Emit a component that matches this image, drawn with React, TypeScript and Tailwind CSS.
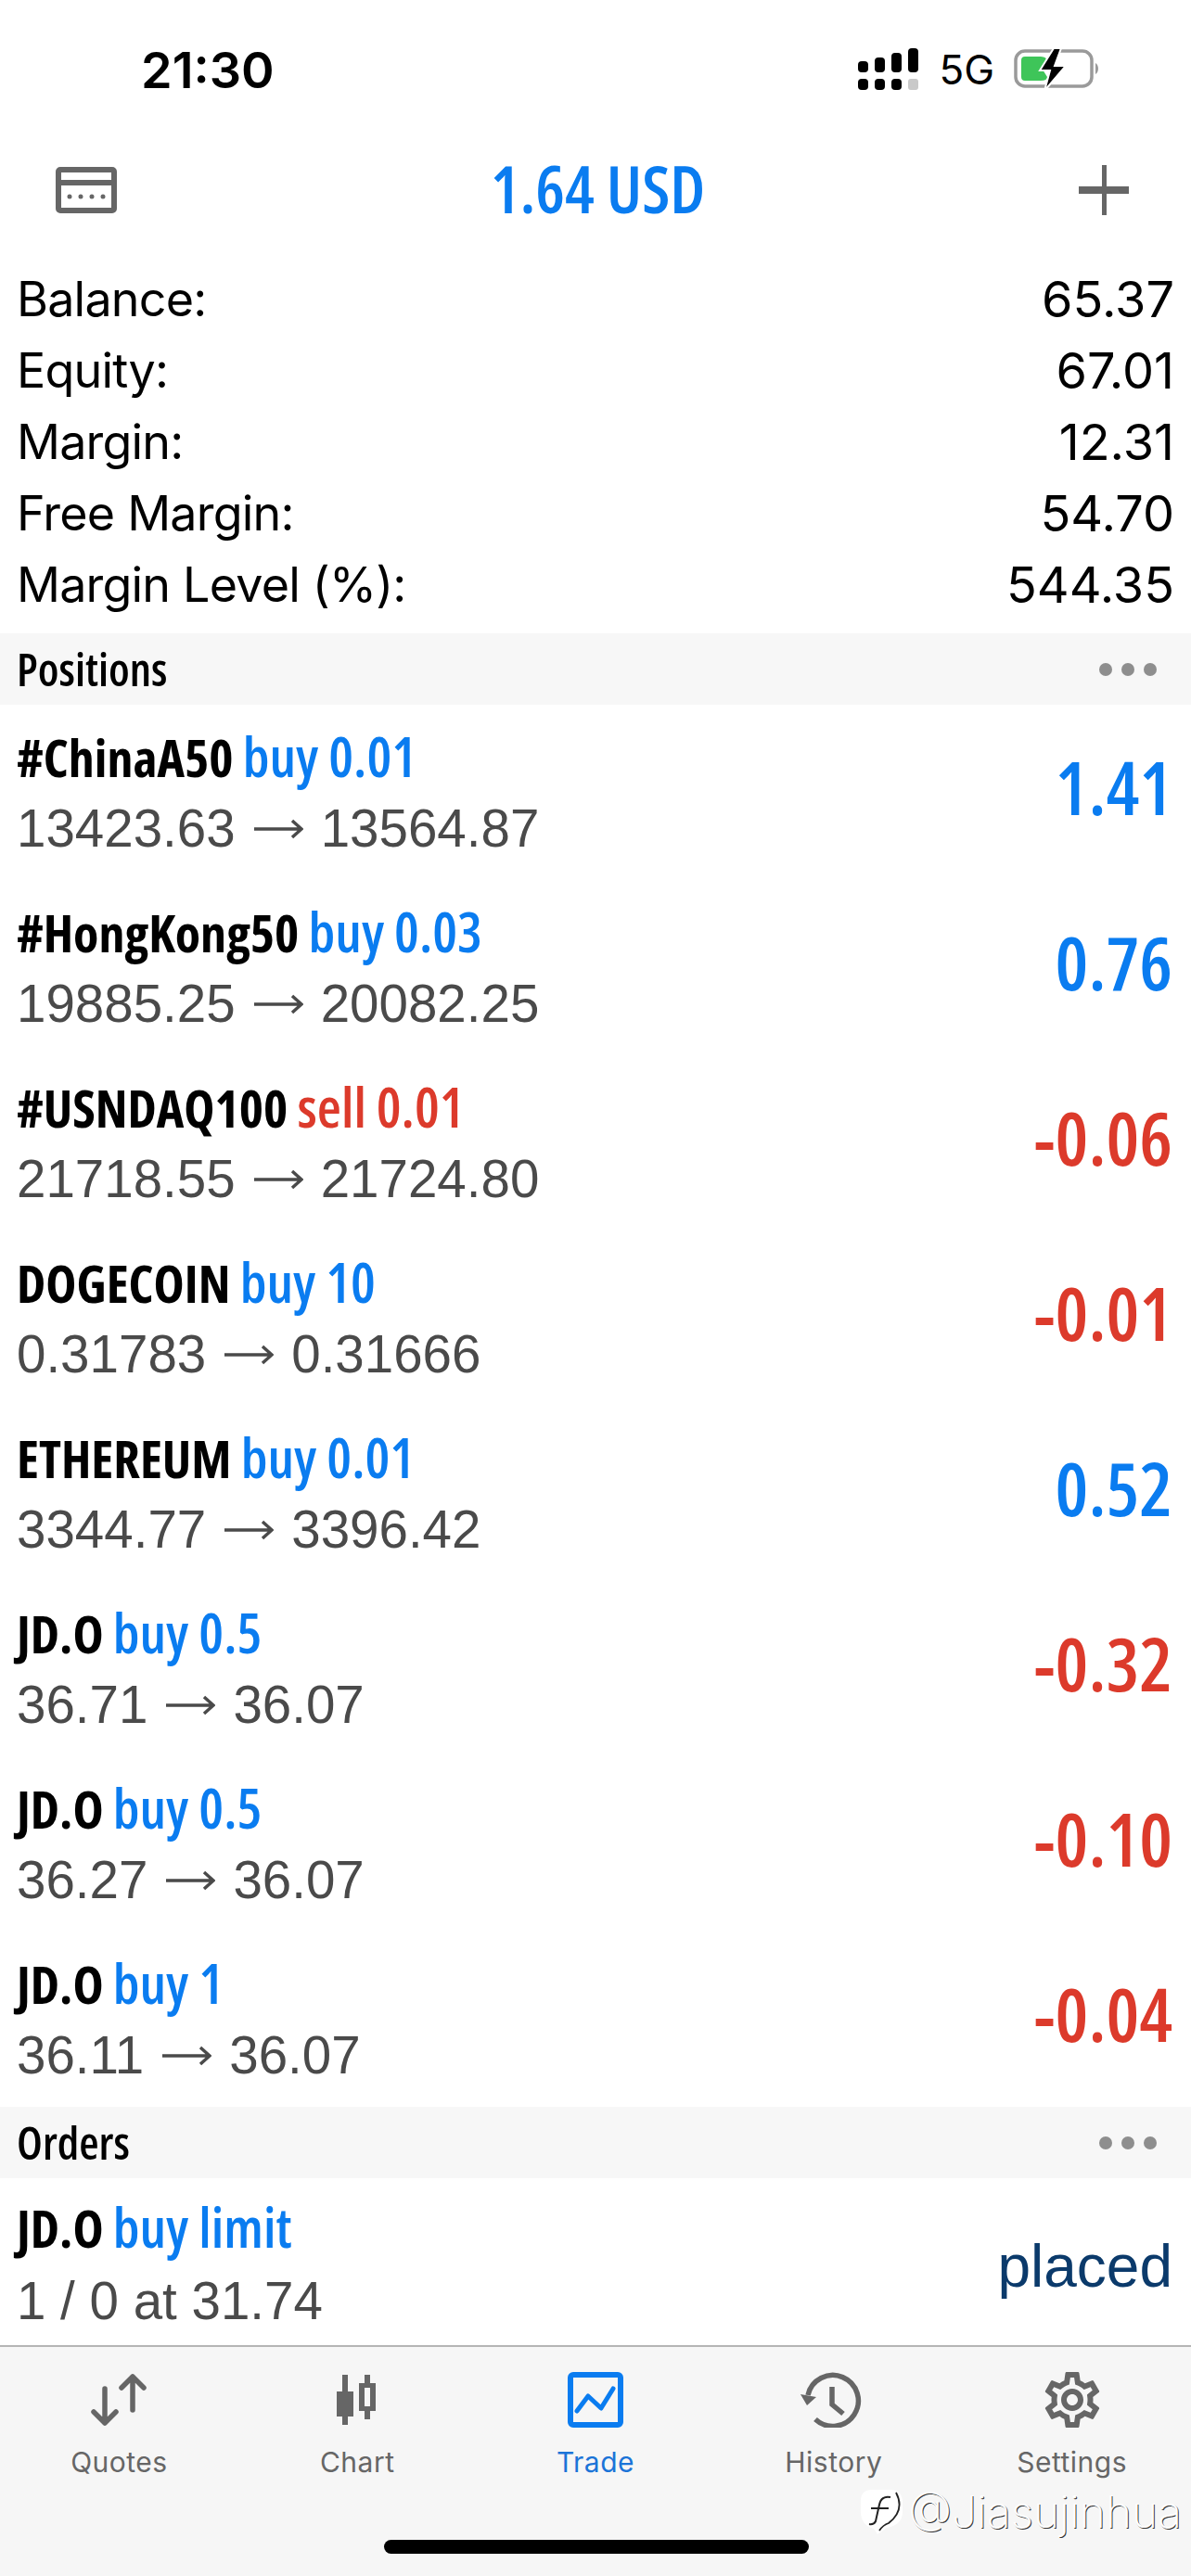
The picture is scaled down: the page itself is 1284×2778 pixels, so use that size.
import { MdOutlineSettings } from "react-icons/md";

const sans = "font-['Liberation_Sans',Arial,sans-serif]";
const inter = "font-['Inter',sans-serif]";
const cond = "font-['Open_Sans',sans-serif] font-stretch-[75%] font-semibold";

const BLUE = "text-[#0a7cf0]";
const RED = "text-[#dc3a2b]";

type Position = { symbol: string; side: string; from: string; to: string; profit: string };

const positions: Position[] = [
  { symbol: "#ChinaA50", side: "buy 0.01", from: "13423.63", to: "13564.87", profit: "1.41" },
  { symbol: "#HongKong50", side: "buy 0.03", from: "19885.25", to: "20082.25", profit: "0.76" },
  { symbol: "#USNDAQ100", side: "sell 0.01", from: "21718.55", to: "21724.80", profit: "-0.06" },
  { symbol: "DOGECOIN", side: "buy 10", from: "0.31783", to: "0.31666", profit: "-0.01" },
  { symbol: "ETHEREUM", side: "buy 0.01", from: "3344.77", to: "3396.42", profit: "0.52" },
  { symbol: "JD.O", side: "buy 0.5", from: "36.71", to: "36.07", profit: "-0.32" },
  { symbol: "JD.O", side: "buy 0.5", from: "36.27", to: "36.07", profit: "-0.10" },
  { symbol: "JD.O", side: "buy 1", from: "36.11", to: "36.07", profit: "-0.04" },
];

const summary = [
  ["Balance:", "65.37"],
  ["Equity:", "67.01"],
  ["Margin:", "12.31"],
  ["Free Margin:", "54.70"],
  ["Margin Level (%):", "544.35"],
];

const SectionHeader = ({ title }: { title: string }) => (
  <div className="flex h-[77px] items-center justify-between bg-[#f7f7f7] pl-[18px] pr-[37px]">
    <span className={`${cond} text-[49px] text-black`}>{title}</span>
    <div className="flex gap-[10px]">
      <span className="size-[14px] rounded-full bg-[#8e8e8e]" />
      <span className="size-[14px] rounded-full bg-[#8e8e8e]" />
      <span className="size-[14px] rounded-full bg-[#8e8e8e]" />
    </div>
  </div>
);

const Arrow = () => (
  <svg width="54" height="24" viewBox="0 0 54 24" className="mx-[19px] inline-block">
    <path d="M1 12H52M42 3L52 12L42 21" fill="none" stroke="#4a4a4a" strokeWidth="3.5" />
  </svg>
);

const Title = ({ symbol, side }: { symbol: string; side: string }) => (
  <div className={`${cond} text-[56px] leading-[78px]`}>
    <span className="font-bold text-black">{symbol}</span>{" "}
    <span className={`text-[60px] ${side.startsWith("sell") ? RED : BLUE}`}>{side}</span>
  </div>
);

const PositionRow = ({ p }: { p: Position }) => (
  <div className="flex h-[189px] items-center justify-between pl-[18px] pr-[20px]">
    <div className="flex flex-col">
      <Title symbol={p.symbol} side={p.side} />
      <div className={`${sans} flex items-center text-[56.5px] leading-[78px] text-[#4a4a4a]`}>
        {p.from}
        <Arrow />
        {p.to}
      </div>
    </div>
    <span className={`${cond} mb-[14px] text-[80px] ${p.profit.startsWith("-") ? RED : BLUE}`}>{p.profit}</span>
  </div>
);

const tabs = ["Quotes", "Chart", "Trade", "History", "Settings"];

const TabIcon = ({ name }: { name: string }) => {
  const c = "#666666";
  if (name === "Quotes")
    return (
      <svg width="60" height="60" viewBox="0 0 60 60" fill="none" stroke={c} strokeWidth="5.5" strokeLinecap="round" strokeLinejoin="round">
        <path d="M15 18V55M3 43L15 55L27 43" />
        <path d="M45 41V5M33 17L45 5L57 17" />
      </svg>
    );
  if (name === "Chart")
    return (
      <svg width="60" height="60" viewBox="0 0 60 60" fill={c}>
        <rect x="14" y="3" width="6" height="54" />
        <rect x="8" y="21" width="18" height="27" />
        <path fillRule="evenodd" d="M38 3H44V12H50V42H44V51H38V42H32V12H38ZM38 17V37H44V17Z" />
      </svg>
    );
  if (name === "Trade")
    return (
      <svg width="60" height="60" viewBox="0 0 60 60" fill="none" stroke="#0a7cf0" strokeLinecap="round" strokeLinejoin="round">
        <rect x="3" y="3" width="54" height="54" rx="3" strokeWidth="6" />
        <path d="M10 42L22 26L36 39L49 18" strokeWidth="5" />
      </svg>
    );
  if (name === "History")
    return (
      <svg width="72" height="60" viewBox="0 0 72 60" fill="none" stroke={c} strokeWidth="5.5">
        <path d="M8 25A27.5 27.5 0 1 1 16 51" />
        <path d="M34 16V35L46 45" />
        <path d="M0 24L17 27L7 36Z" fill={c} stroke="none" />
      </svg>
    );
  return <MdOutlineSettings size={72} color={c} className="-my-[6px]" />;
};

const App = () => {
  return (
    <div className={`${sans} flex h-[2778px] w-[1284px] flex-col overflow-hidden bg-white`}>
      {/* status bar */}
      <div className="flex h-[150px] items-center justify-between pl-[152px] pr-[97px]">
        <span className={`${inter} text-[54px] font-semibold text-black`}>21:30</span>
        <div className="flex items-center gap-[21px]">
          <svg width="66" height="46" viewBox="0 0 66 46" fill="#000">
            <rect x="0" y="14" width="11" height="12" rx="4" />
            <rect x="0" y="33" width="11" height="12" rx="4" />
            <rect x="18" y="10" width="11" height="16" rx="4" />
            <rect x="18" y="33" width="11" height="12" rx="4" />
            <rect x="36" y="5" width="11" height="21" rx="4" />
            <rect x="36" y="33" width="11" height="12" rx="4" />
            <rect x="54" y="0" width="11" height="26" rx="4" />
            <rect x="54" y="33" width="11" height="12" rx="3" fill="#c9c9c9" />
          </svg>
          <span className={`${inter} text-[44px] text-black`}>5G</span>
          <svg width="94" height="46" viewBox="0 0 94 46" fill="none">
            <rect x="2" y="3" width="82" height="38" rx="10" stroke="#9a9a9a" strokeWidth="3.5" />
            <path d="M12 9H29Q36 9 36 15L31 23L36 31Q36 35 29 35H12Q8 35 8 31V13Q8 9 12 9Z" fill="#3ec559" />
            <path d="M88 16C92 18 92 26 88 28Z" fill="#9a9a9a" />
            <path d="M43 0L28 24H39L33 46L56 19H44L51 0Z" fill="#000" stroke="#fff" strokeWidth="2" />
          </svg>
        </div>
      </div>

      {/* account header */}
      <div className="flex h-[110px] items-center justify-between pl-[60px] pr-[67px]">
        <svg width="66" height="50" viewBox="0 0 66 50" fill="#666">
          <path fillRule="evenodd" d="M5 0H61A5 5 0 0 1 66 5V45A5 5 0 0 1 61 50H5A5 5 0 0 1 0 45V5A5 5 0 0 1 5 0ZM6 6V14H60V6ZM6 20V44H60V20Z" />
          <circle cx="15" cy="32" r="2.5" />
          <circle cx="27" cy="32" r="2.5" />
          <circle cx="39" cy="32" r="2.5" />
          <circle cx="51" cy="32" r="2.5" />
        </svg>
        <span className={`${cond} mb-[3px] text-[71px] ${BLUE}`}>1.64 USD</span>
        <svg width="54" height="54" viewBox="0 0 54 54" fill="#666">
          <rect x="25" y="0" width="5" height="54" />
          <rect x="0" y="23" width="54" height="8" />
        </svg>
      </div>

      {/* summary */}
      <div className={`${inter} flex flex-col pb-[14px] pl-[18px] pr-[18px] pt-[24px]`}>
        {summary.map(([label, value]) => (
          <div key={label} className="flex h-[77px] items-center justify-between text-black">
            <span className="text-[52px] tracking-[-0.8px]">{label}</span>
            <span className="text-[54px]">{value}</span>
          </div>
        ))}
      </div>

      <SectionHeader title="Positions" />
      {positions.map((p, i) => (
        <PositionRow key={i} p={p} />
      ))}

      <SectionHeader title="Orders" />
      <div className="flex h-[180px] items-center justify-between pl-[18px] pr-[20px] pt-[4px]">
        <div className="flex flex-col">
          <Title symbol="JD.O" side="buy limit" />
          <div className="pt-[2px] text-[56.5px] leading-[78px] text-[#4a4a4a]">1 / 0 at 31.74</div>
        </div>
        <span className="mt-[5px] text-[64px] text-[#0b3a6b]">placed</span>
      </div>

      {/* tab bar */}
      <div className="relative flex-1 border-t-[2px] border-[#b5b5b5] bg-[#f6f6f6]">
        <div className="grid grid-cols-5 pt-[27px]">
          {tabs.map((t) => (
            <div key={t} className="flex flex-col items-center gap-[17px]">
              <TabIcon name={t} />
              <span className={`${inter} text-[30px] leading-[40px] tracking-[0.5px] ${t === "Trade" ? "text-[#1b74d8]" : "text-[#666666]"}`}>
                {t}
              </span>
            </div>
          ))}
        </div>
        <div className="absolute bottom-[24px] left-[414px] h-[15px] w-[458px] rounded-full bg-black" />
        <div className="absolute bottom-[44px] right-[10px] flex items-center gap-[5px]">
          <svg width="46" height="48" viewBox="0 0 46 48" fill="none">
            <path d="M12 0H32Q45 0 45 14V24Q45 38 28 41L18 48L14 42Q0 38 0 24V12Q0 0 12 0Z" fill="#fff" />
            <path d="M38 3Q48 22 30 36Q24 38 20 44" stroke="#222" strokeWidth="1.8" />
            <path d="M32 8Q22 6 20 16L16 34Q14 38 9 37M11 20H30" stroke="#222" strokeWidth="2" />
          </svg>
          <span className={`${inter} text-[48px] font-extralight leading-[50px] text-white [text-shadow:1px_1px_0_#333]`}>
            @Jiasujinhua
          </span>
        </div>
      </div>
    </div>
  );
};

export default App;
